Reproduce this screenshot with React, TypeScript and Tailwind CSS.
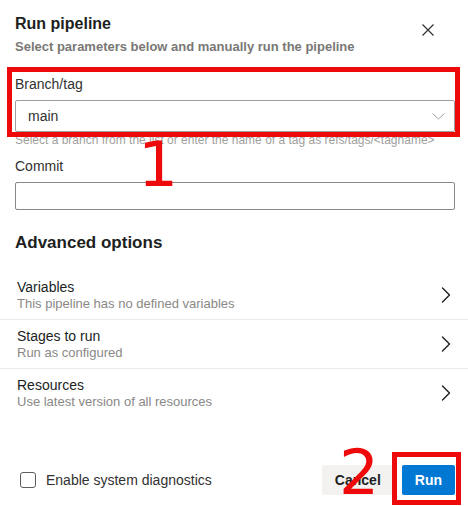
import React from "react";

const font = { fontFamily: '"Liberation Sans", Arial, sans-serif' };

function Chevron() {
  return (
    <svg width="10" height="16" viewBox="0 0 10 16" fill="none">
      <path d="M1.5 1 L8.5 8 L1.5 15" stroke="#201f1e" strokeWidth="1.4" strokeLinecap="round" strokeLinejoin="round" />
    </svg>
  );
}

function Row({ title, sub, border }: { title: string; sub: string; border?: boolean }) {
  return (
    <div className={`flex items-center justify-between px-[17px] py-2 ${border ? "border-b border-[#edebe9]" : ""}`}>
      <div className="flex flex-col">
        <div className="text-[14px] leading-[17px] text-[#201f1e]">{title}</div>
        <div className="text-[13px] leading-[15px] text-[#8a8886]">{sub}</div>
      </div>
      <Chevron />
    </div>
  );
}

export default function App() {
  return (
    <div className="relative w-[468px] h-[506px] bg-white overflow-hidden" style={font}>
      <div className="flex flex-col">
        <div className="flex pt-[13px] pl-[15px] pr-[24px]">
          <div className="flex-1 flex flex-col">
            <div className="text-[16px] leading-[22px] font-bold text-[#201f1e]">Run pipeline</div>
            <div className="mt-[2px] text-[13px] leading-[20px] font-bold text-[#797775]">
              Select parameters below and manually run the pipeline
            </div>
          </div>
          <button className="w-8 h-8 mt-[1px] flex items-center justify-center">
            <svg width="12" height="12" viewBox="0 0 12 12">
              <path d="M0.5 0.5 L11.5 11.5 M11.5 0.5 L0.5 11.5" stroke="#323130" strokeWidth="1.2" />
            </svg>
          </button>
        </div>

        <div className="flex flex-col px-[15px] pr-[13px] mt-[17px]">
          <div className="text-[14px] leading-[20px] text-[#323130]">Branch/tag</div>
          <div className="mt-[6px] h-[32px] border border-[#a19f9d] rounded-[2px] flex items-center justify-between pl-[12px] pr-[9px]">
            <span className="text-[14px] text-[#323130]">main</span>
            <svg width="13" height="7" viewBox="0 0 13 7" fill="none">
              <path d="M0.5 0.5 L6.5 6 L12.5 0.5" stroke="#a19f9d" strokeWidth="1" />
            </svg>
          </div>
          <div className="text-[12px] leading-[16px] text-[#a19f9d] whitespace-nowrap">
            Select a branch from the list or enter the name of a tag as refs/tags/&lt;tagname&gt;
          </div>
          <div className="mt-[8px] text-[14px] leading-[20px] text-[#323130]">Commit</div>
          <div className="mt-[6px] h-[28px] border border-[#8a8886] rounded-[2px]" />
          <div className="mt-[22px] text-[17px] leading-[22px] font-bold text-[#201f1e]">Advanced options</div>
        </div>

        <div className="mt-[17px] flex flex-col">
          <Row title="Variables" sub="This pipeline has no defined variables" border />
          <Row title="Stages to run" sub="Run as configured" border />
          <Row title="Resources" sub="Use latest version of all resources" />
        </div>

        <div className="mt-[48px] flex items-center justify-between pl-[20px] pr-[13px]">
          <div className="flex items-center gap-[10px]">
            <div className="w-4 h-4 border border-[#605e5c] rounded-[3px]" />
            <span className="text-[14px] text-[#323130]">Enable system diagnostics</span>
          </div>
          <div className="flex gap-2">
            <button className="h-[30px] px-[13px] bg-[#f3f2f1] rounded-[2px] text-[14px] font-bold text-[#201f1e]">Cancel</button>
            <button className="h-[30px] px-[13px] bg-[#0078d4] rounded-[2px] text-[14px] font-bold text-white">Run</button>
          </div>
        </div>
      </div>

      {/* annotations */}
      <div className="absolute left-[7px] top-[67px] w-[453px] h-[70px] border-[5px] border-[#ee0a0a] pointer-events-none" />
      <div
        className="absolute left-[138px] top-[133px] text-[63px] leading-[63px] text-[#ee0a0a] pointer-events-none"
        style={{ fontFamily: '"DejaVu Sans", sans-serif' }}
      >
        1
      </div>
      <div
        className="absolute left-[339px] top-[441px] text-[63px] leading-[63px] text-[#ee0a0a] pointer-events-none"
        style={{ fontFamily: '"DejaVu Sans", sans-serif' }}
      >
        2
      </div>
      <div className="absolute left-[392px] top-[452px] w-[69px] h-[53px] border-[5px] border-[#ee0a0a] pointer-events-none" />
    </div>
  );
}
